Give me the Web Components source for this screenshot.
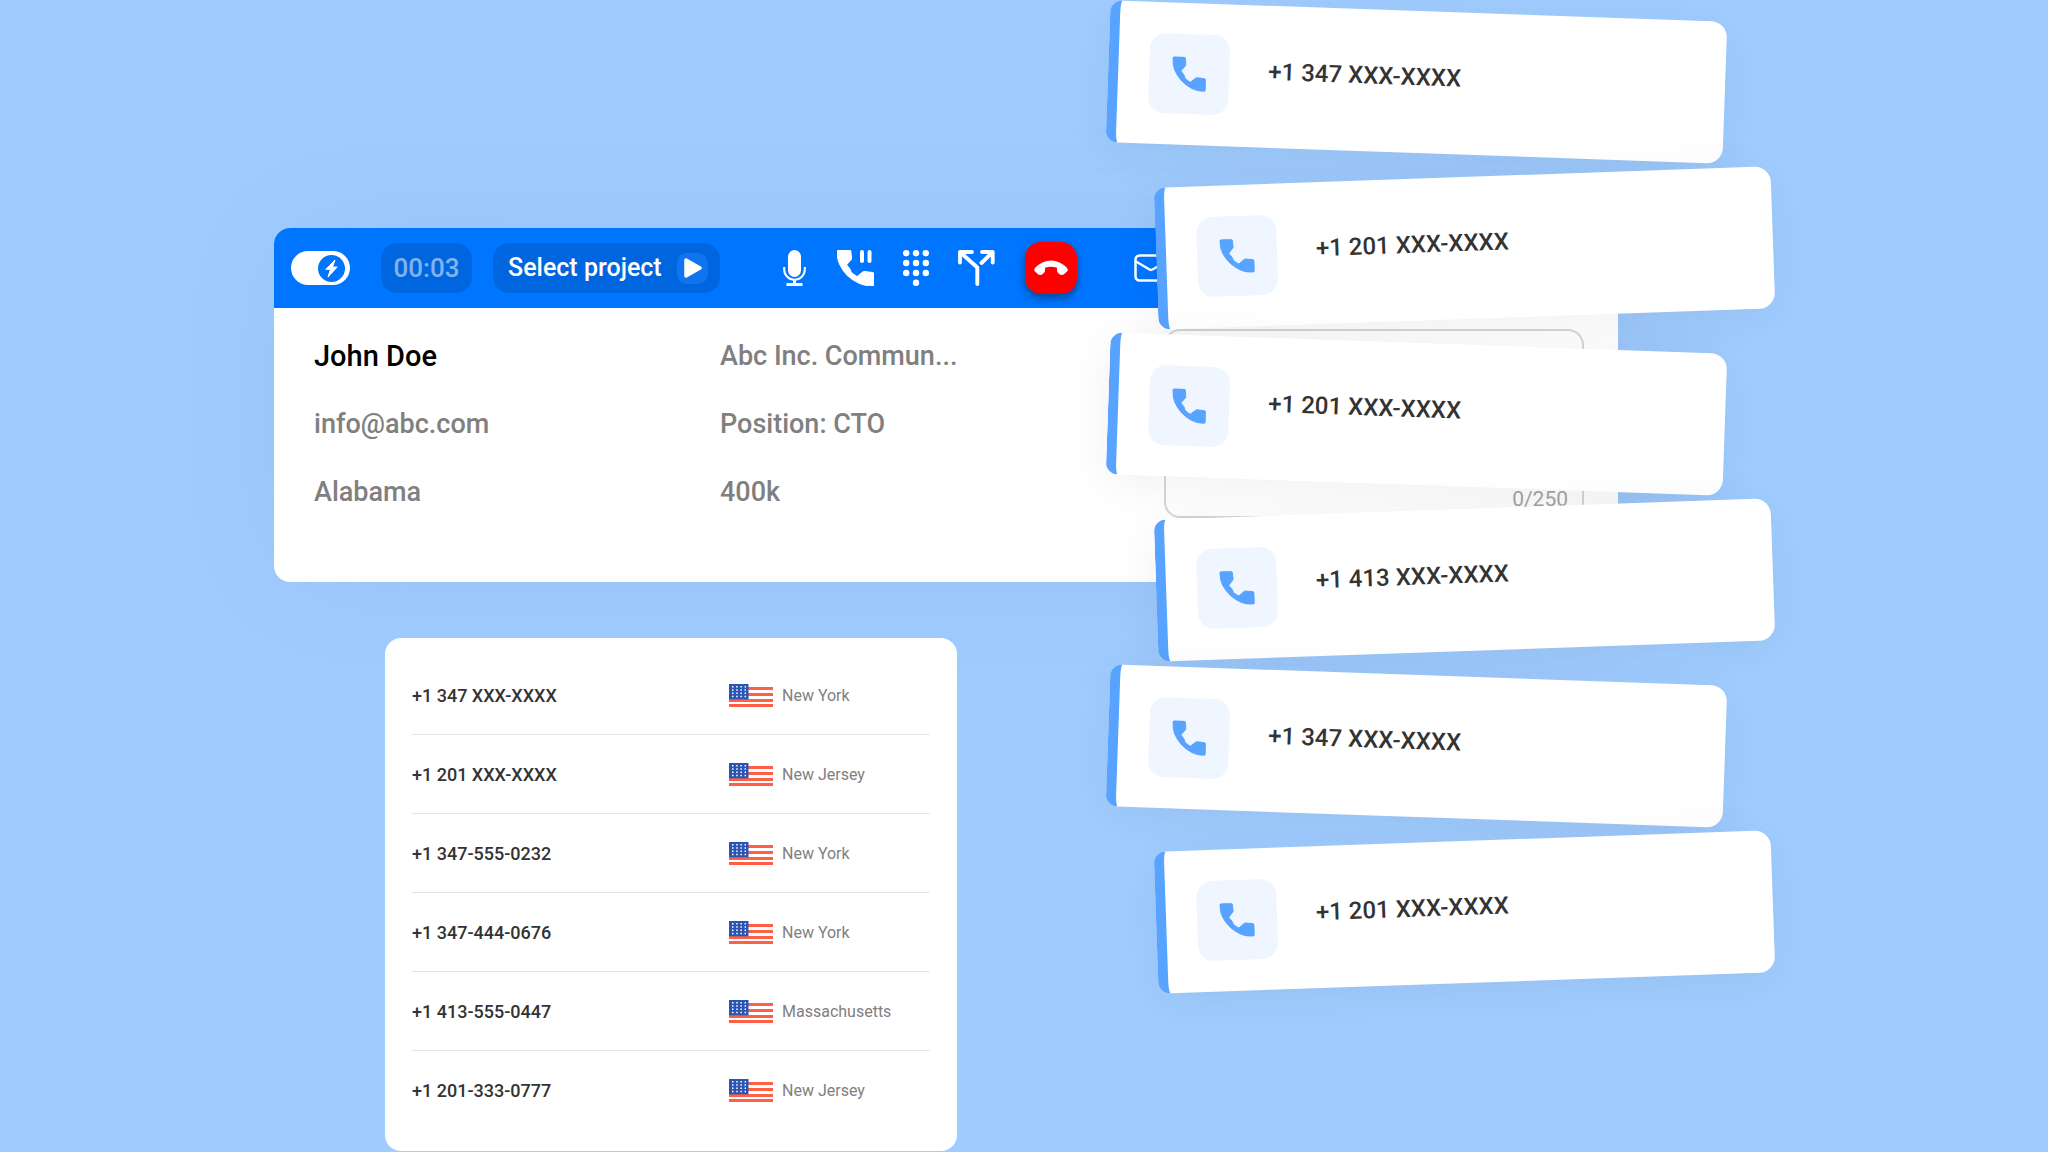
<!DOCTYPE html>
<html lang="en">
<head>
<meta charset="utf-8">
<title>Dialer</title>
<style>
  html, body { margin: 0; }
  body { background: #a0ccff; font-family: Roboto, "Liberation Sans", sans-serif; color: #333; }
</style>
</head>
<body>
<dialer-page></dialer-page>

<template id="t-page">
  <style>
    :host {
      display: grid;
      grid-template-columns: 274fr 834fr 510fr 430fr;
      min-height: 100vh;
      overflow: hidden;
    }
    .main { grid-column: 2 / 4; grid-row: 1; padding-top: 228px; display: flex; flex-direction: column; gap: 56px; }
    number-table { width: 572px; margin-left: 111px; }
    .calls { grid-column: 3 / 5; grid-row: 1; padding-top: 11px; display: flex; flex-direction: column; gap: 24px; }
    call-card { max-width: 617px; transform: rotate(2deg); }
    call-card:nth-child(even) { margin-left: 48px; transform: rotate(-2deg); }
  </style>
  <div class="main">
    <call-panel></call-panel>
    <number-table></number-table>
  </div>
  <div class="calls">
    <call-card>+1 347 XXX-XXXX</call-card>
    <call-card>+1 201 XXX-XXXX</call-card>
    <call-card>+1 201 XXX-XXXX</call-card>
    <call-card>+1 413 XXX-XXXX</call-card>
    <call-card>+1 347 XXX-XXXX</call-card>
    <call-card>+1 201 XXX-XXXX</call-card>
  </div>
</template>

<template id="t-panel">
  <style>
    :host { display: block; border-radius: 16px; background: #fff; box-shadow: 0 0 120px rgba(90, 110, 150, .1); }
    .body {
      display: grid;
      grid-template-columns: 406fr 444fr 420fr;
      padding: 21px 34px 64px 40px;
    }
    .col { display: flex; flex-direction: column; gap: 34px; padding-top: 10px; font-size: 27px; font-weight: 500; line-height: 34px; color: #808080; }
    .name { font-size: 29px; color: #000; }
    .note { position: relative; display: flex; }
    textarea {
      flex: 1; box-sizing: border-box; height: 189px; margin: 0; padding: 16px; resize: none;
      border: 2px solid #d6d6d6; border-radius: 16px; background: transparent; font: 20px/24px Roboto, sans-serif;
    }
    .count { position: absolute; right: 16px; bottom: 7px; font-size: 21px; line-height: 24px; color: #a6a6a6; }
  </style>
  <call-toolbar></call-toolbar>
  <div class="body">
    <div class="col">
      <span class="name">John Doe</span>
      <span>info@abc.com</span>
      <span>Alabama</span>
    </div>
    <div class="col">
      <span>Abc Inc. Commun...</span>
      <span>Position: CTO</span>
      <span>400k</span>
    </div>
    <div class="note">
      <textarea aria-label="Note" maxlength="250"></textarea>
      <span class="count">0/250</span>
    </div>
  </div>
</template>

<template id="t-toolbar">
  <style>
    :host {
      display: flex; align-items: center; height: 80px; padding-left: 17px; box-sizing: border-box;
      background: #0075ff; border-radius: 16px 16px 0 0; color: #fff;
    }
    button { display: flex; align-items: center; justify-content: center; padding: 0; border: 0; background: none; color: inherit; font: inherit; }
    svg { display: block; }
    .switch { display: grid; width: 59px; height: 34px; margin-right: 31px; }
    .switch input { grid-area: 1 / 1; appearance: none; width: 100%; height: 100%; margin: 0; border-radius: 17px; background: #fff; }
    .switch svg { grid-area: 1 / 1; justify-self: end; align-self: center; margin-right: 5px; pointer-events: none; }
    .pill { height: 50px; border-radius: 16px; background: #0066df; font-size: 25px; font-weight: 500; line-height: 50px; }
    .timer { width: 91px; margin-right: 21px; text-align: center; font-size: 26px; color: #80b3f0; }
    .pill.project { width: 227px; box-sizing: border-box; justify-content: space-between; padding: 0 12px 0 15px; margin-right: 63px; }
    .play { display: flex; align-items: center; justify-content: center; width: 31px; height: 31px; border-radius: 10px; background: #0f75ee; }
    .tools { display: flex; align-items: center; gap: 29px; margin-right: 30px; }
    .end { width: 52px; height: 52px; border-radius: 16px; background: #f00; box-shadow: 0 4px 8px rgba(0, 0, 0, .4); margin-right: 57px; }
  </style>
  <label class="switch" title="Auto dial">
    <input type="checkbox" role="switch" checked aria-label="Auto dial">
    <svg width="27" height="27" viewBox="0 0 27 27"><circle cx="13.500" cy="13.500" r="13.500" fill="#0075ff"/><path d="M17 5 7.800 14.300H12.500L10 22 19.200 12H14.500Z" fill="#fff" stroke="#fff" stroke-width="1" stroke-linejoin="round"/></svg>
  </label>
  <span class="pill timer">00:03</span>
  <button class="pill project" type="button">Select project
    <span class="play"><svg width="18" height="20" viewBox="0 0 18 20"><path d="M2 2V18L16 10Z" fill="#fff" stroke="#fff" stroke-width="3.500" stroke-linejoin="round"/></svg></span>
  </button>
  <div class="tools">
    <button type="button" aria-label="Mute">
      <svg width="25" height="36" viewBox="0 0 25 36"><rect x="5" y="0" width="13" height="27" rx="6.500" fill="#fff"/><path d="M1.200 17V19.500a10.300 10.300 0 0 0 20.600 0V17" fill="none" stroke="#fff" stroke-width="2"/><path d="M10 30h3v3h6.500v3h-16v-3H10z" fill="#fff"/></svg>
    </button>
    <button type="button" aria-label="Hold">
      <svg width="37" height="36" viewBox="0 0 37 36" fill="#fff"><svg width="37" height="36" viewBox="120 -840 720 720" preserveAspectRatio="none"><path d="M798-120q-125 0-247-54.500T329-329Q229-429 174.500-551T120-798q0-18 12-30t30-12h190q14 0 25 9.500t13 22.500l10 120q2 16-1 27t-11 19l-83 98q20 37 47.500 61.500T395-394q31 31 57 49.500t60 36.500l100-82q9-9 23.500-13.500T660-408l148 16q14 4 23 14.500t9 23.500v192q0 18-12 30t-30 12Z" stroke="#fff" stroke-width="20"/></svg><rect x="23" y="0" width="4" height="13" rx="2"/><rect x="30.500" y="0" width="4" height="13" rx="2"/></svg>
    </button>
    <button type="button" aria-label="Keypad">
      <svg width="26" height="36" viewBox="0 0 26 36" fill="#fff"><circle cx="3.200" cy="3.200" r="3.200"/><circle cx="13" cy="3.200" r="3.200"/><circle cx="22.800" cy="3.200" r="3.200"/><circle cx="3.200" cy="13" r="3.200"/><circle cx="13" cy="13" r="3.200"/><circle cx="22.800" cy="13" r="3.200"/><circle cx="3.200" cy="23" r="3.200"/><circle cx="13" cy="23" r="3.200"/><circle cx="22.800" cy="23" r="3.200"/><circle cx="13" cy="32.800" r="3.200"/></svg>
    </button>
    <button type="button" aria-label="Transfer">
      <svg width="37" height="36" viewBox="0 0 37 36" fill="none" stroke="#fff" stroke-width="3.900" stroke-linejoin="round" stroke-linecap="round"><path d="M2 12.500V2H14M2.500 2.500 19.300 17.500V34M24 2H34.700V12.500M34 2.700 23.500 13"/></svg>
    </button>
  </div>
  <button class="end" type="button" aria-label="End call">
    <svg width="34" height="16" viewBox="0 0 34 16"><path d="M1 8Q8 .5 17 .5Q26 .5 33 8Q34.500 10 33 11.500L30 14.300Q28 15.800 26 14.500L24.500 13.300Q23 12.300 23 10.500V7.700Q17 6 11 7.700V10.500Q11 12.300 9.500 13.300L8 14.500Q6 15.800 4 14.300L1 11.500Q-.5 10 1 8Z" fill="#fff"/></svg>
  </button>
  <button type="button" aria-label="Email">
    <svg width="34" height="28" viewBox="0 0 34 28" fill="none" stroke="#fff" stroke-width="2.500" stroke-linejoin="round"><rect x="1.500" y="1.500" width="31" height="25" rx="4"/><path d="M2 7.500 15 15.300Q17 16.500 19 15.300L32 7.500"/></svg>
  </button>
</template>

<template id="t-card">
  <style>
    :host {
      display: flex; align-items: center; gap: 39px; height: 142px; box-sizing: border-box; padding-left: 31px;
      width: 100%; background: #fff; border-left: 10px solid #57a3ff; border-radius: 12px 16px 16px 12px;
      box-shadow: 0 8px 48px rgba(0, 0, 0, .06); 
    }
    .tile { display: flex; align-items: center; justify-content: center; width: 80px; height: 80px; border-radius: 16px; background: #eff6ff; }
    .number { font-size: 24px; font-weight: 500; line-height: 28px; padding-bottom: 10px; color: #333; }
    svg { display: block; }
  </style>
  <span class="tile"><svg width="34" height="34" viewBox="120 -840 720 720" fill="#57a3ff"><path d="M798-120q-125 0-247-54.500T329-329Q229-429 174.500-551T120-798q0-18 12-30t30-12h190q14 0 25 9.500t13 22.500l10 120q2 16-1 27t-11 19l-83 98q20 37 47.500 61.500T395-394q31 31 57 49.500t60 36.500l100-82q9-9 23.500-13.500T660-408l148 16q14 4 23 14.500t9 23.500v192q0 18-12 30t-30 12Z" stroke="#57a3ff" stroke-width="20"/></svg></span>
  <span class="number"><slot></slot></span>
</template>

<template id="t-table">
  <style>
    :host { display: block; box-sizing: border-box; padding: 18px 27px 21px; border-radius: 16px; background: #fff; }
    table { width: 100%; border-collapse: separate; border-spacing: 0; table-layout: fixed; }
    th, td { height: 78px; padding: 0; border-bottom: 1px solid #e4e4e4; text-align: left; vertical-align: middle; }
    tr:last-child > * { border-color: transparent; }
    th { width: 317px; font-size: 18px; font-weight: 500; color: #333; }
    .place { display: flex; align-items: center; gap: 9px; font-size: 16px; color: #808080; }
    us-flag { flex: none; }
  </style>
  <table aria-label="Numbers"><tbody></tbody></table>
</template>

<template id="t-flag">
  <style>:host { display: block; } svg { display: block; }</style>
  <svg width="44" height="23" viewBox="0 0 44 23" role="img" aria-label="United States">
    <g fill="#ff5f45"><rect y="3" width="44" height="3"/><rect y="9" width="44" height="3"/><rect y="15" width="44" height="3"/><rect y="20" width="44" height="3"/></g>
    <rect width="19.500" height="15.300" fill="#2c55b3"/>
    <g stroke="#fff" stroke-width="1.500" stroke-dasharray="1.500 2.700"><path d="M3 2.700H17M3 6H17M3 9.200H17M3 12.500H17"/></g>
  </svg>
</template>

<script>
  const fromTemplate = (id) => class extends HTMLElement {
    constructor() {
      super();
      this.attachShadow({ mode: 'open' }).append(document.getElementById(id).content.cloneNode(true));
    }
  };

  customElements.define('us-flag', class extends fromTemplate('t-flag') {});
  customElements.define('call-toolbar', class extends fromTemplate('t-toolbar') {});
  customElements.define('call-panel', class extends fromTemplate('t-panel') {});
  customElements.define('call-card', class extends fromTemplate('t-card') {});

  customElements.define('number-table', class extends fromTemplate('t-table') {
    connectedCallback() {
      const rows = [
        ['+1 347 XXX-XXXX', 'New York'],
        ['+1 201 XXX-XXXX', 'New Jersey'],
        ['+1 347-555-0232', 'New York'],
        ['+1 347-444-0676', 'New York'],
        ['+1 413-555-0447', 'Massachusetts'],
        ['+1 201-333-0777', 'New Jersey'],
      ];
      this.shadowRoot.querySelector('tbody').innerHTML = rows.map(([number, place]) =>
        `<tr><th scope="row">${number}</th><td><div class="place"><us-flag></us-flag><span>${place}</span></div></td></tr>`).join('');
    }
  });

  customElements.define('dialer-page', class extends fromTemplate('t-page') {});
</script>
</body>
</html>
